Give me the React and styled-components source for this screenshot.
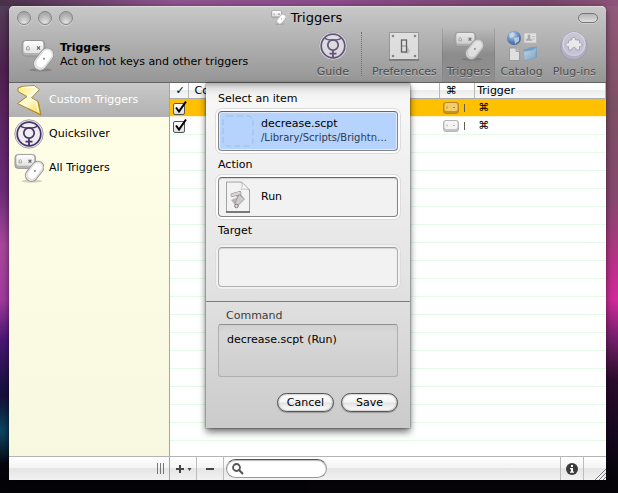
import React, { useState } from 'react';
import styled, { createGlobalStyle, css } from 'styled-components';

const Global = createGlobalStyle`
  *, *::before, *::after { box-sizing: border-box; }
  body { margin: 0; }
  body, button, input {
    font-family: "DejaVu Sans", "Liberation Sans", sans-serif;
    font-size: 11px;
    line-height: 14px;
    color: #000;
  }
  button { border: 0; margin: 0; padding: 0; background: none; text-align: left; }
  svg { display: block; flex: none; }
`;

const Desktop = styled.div`
  min-height: 100vh;
  display: flex;
  padding: 6px 12px 13px 9px;
  background:
    radial-gradient(circle at 1px 430px, #0c4664 0, transparent 34px),
    linear-gradient(90deg, #4a3048 0, #8f5590 28%, #8d4c8b 55%, #76476b 88%, #8f5478 100%) top / 100% 6px no-repeat,
    linear-gradient(180deg, #534057 0, #4f2150 70px, #6b2b78 190px, #a8489c 245px, #a03a9d 300px, #4a1674 340px, #1a1244 385px, #080914 445px, #040308 480px) left / 50% 100% no-repeat,
    linear-gradient(180deg, #945a7c 0, #7c5063 110px, #87476f 200px, #bd2f8c 270px, #d02b99 300px, #7b226f 335px, #2c0b2c 380px, #12081c 440px, #060409 480px) right / 50% 100% no-repeat;
`;

const Window = styled.div`
  flex: 1;
  min-width: 0;
  display: flex;
  flex-direction: column;
  background: #fff;
  border-radius: 5px 5px 0 0;
  box-shadow: 0 2px 7px rgba(0, 0, 0, 0.55);
`;

const Header = styled.header`
  background: linear-gradient(180deg, #c8c8c8, #969696);
  border-top: 1px solid #dcdcdc;
  border-bottom: 1px solid #636363;
  border-radius: 5px 5px 0 0;
`;

const TitleBar = styled.div`
  display: grid;
  grid-template-columns: 1fr auto 1fr;
  align-items: center;
  height: 21px;
  padding: 0 8px;
`;

const Lights = styled.div`
  display: flex;
  gap: 7px;
`;

const Light = styled.button`
  width: 14px;
  height: 14px;
  border-radius: 7px;
  border: 1px solid #858585;
  background: radial-gradient(circle at 50% 85%, #e2e2e2 0, #b9b9b9 50%, #9b9b9b 100%);
  box-shadow: 0 1px 0 #d8d8d8;
`;

const Title = styled.h1`
  display: flex;
  align-items: center;
  gap: 5px;
  margin: 0;
  padding-right: 2px;
  font-size: 13px;
  font-weight: 400;
  line-height: 16px;
`;

const Lozenge = styled.button`
  justify-self: end;
  width: 20px;
  height: 10px;
  border-radius: 5px;
  border: 1px solid #777;
  background: linear-gradient(180deg, #b4b4b4, #dedede);
  box-shadow: 0 1px 0 #d0d0d0;
`;

const Toolbar = styled.div`
  display: flex;
  justify-content: space-between;
  height: 54px;
  padding: 0 5px 0 12px;
`;

const Summary = styled.div`
  display: flex;
  align-items: center;
  gap: 6px;
`;

const SummaryTitle = styled.h2`
  margin: 0;
  font-size: 11px;
  font-weight: 700;
`;

const SummaryText = styled.p`
  margin: 0;
  white-space: nowrap;
`;

const Tools = styled.nav`
  display: flex;
`;

const Tool = styled.button`
  display: flex;
  flex-direction: column;
  align-items: center;
  gap: 4px;
  padding: 3px 4px 0;
  color: #4d4d4d;
  text-shadow: 0 1px 0 #bebebe;
  border: solid transparent;
  border-width: 0 1px;
  & > svg { opacity: 0.72; }
  ${p => p.$active && css`
    background: linear-gradient(180deg, rgba(0, 0, 0, 0), rgba(0, 0, 0, 0.17) 50%, rgba(0, 0, 0, 0.05));
    border-image: linear-gradient(180deg, #aaa, #808080 50%, #8c8c8c) 1;
  `}
`;

const ToolDivider = styled.div`
  margin: 4px 5px 6px 7px;
  border-left: 1px dotted #6c6c6c;
`;

const Main = styled.main`
  position: relative;
  flex: 1;
  display: grid;
  grid-template-columns: 161px 1fr;
`;

const Sidebar = styled.nav`
  background: linear-gradient(180deg, #fffee6, #f8f7df);
  border-right: 1px solid #a5a5a5;
`;

const Group = styled.button`
  display: flex;
  align-items: center;
  gap: 5px;
  width: 100%;
  height: 34px;
  padding: 0 5px;
  ${p => p.$active && css`
    color: #fff;
    background: linear-gradient(180deg, #c9c9c9, #b1b1b1);
  `}
`;

const Listing = styled.div`
  background: repeating-linear-gradient(180deg, #fff 0, #fff 17px, #e6faea 17px, #e6faea 18px) 0 16px;
`;

const Table = styled.table`
  width: 100%;
  table-layout: fixed;
  border-collapse: separate;
  border-spacing: 0;
`;

const Th = styled.th`
  width: ${p => p.$w || 'auto'};
  height: 16px;
  padding: 0 0 0 2px;
  text-align: ${p => p.$align || 'left'};
  font-weight: 400;
  line-height: 14px;
  white-space: nowrap;
  background: linear-gradient(180deg, #fff 0, #fcfcfc 45%, #ececec 50%, #f8f8f8 100%);
  border-right: 1px solid #b8b8b8;
  border-bottom: 1px solid #acacac;
`;

const Row = styled.tr`
  & > td {
    height: 18px;
    padding: 0 0 0 3px;
    line-height: 14px;
    border-bottom: 1px solid ${p => (p.$selected ? '#fff4cf' : '#e6faea')};
    background: ${p => (p.$selected ? '#ffc000' : '#fff')};
  }
`;

const Check = styled.label`
  position: relative;
  display: flex;
  align-items: flex-end;
  width: 16px;
  height: 16px;
  & > input {
    appearance: none;
    width: 12px;
    height: 12px;
    margin: 0 0 1px;
    border: 1px solid #555;
    border-radius: 2px;
    background: linear-gradient(180deg, #fff, #dcdcdc);
  }
  & > svg { position: absolute; left: 0; top: 0; display: none; pointer-events: none; }
  & > input:checked + svg { display: block; }
`;

const KeyCell = styled.span`
  display: flex;
  align-items: center;
  gap: 5px;
`;

const Tick = styled.span`
  width: 1px;
  height: 8px;
  background: #665c4c;
`;

const Footer = styled.footer`
  display: grid;
  grid-template-columns: 161px 1fr;
  height: 24px;
  border-top: 1px solid #b4b4b4;
  background: linear-gradient(180deg, #fff 0, #f3f3f3 50%, #e5e5e5 50%, #f2f2f2 100%);
`;

const Grip = styled.div`
  display: flex;
  align-items: center;
  justify-content: flex-end;
  padding-right: 5px;
  border-right: 1px solid #a5a5a5;
`;

const Actions = styled.div`
  display: flex;
  align-items: center;
`;

const BarButton = styled.button`
  display: flex;
  align-items: center;
  justify-content: center;
  height: 100%;
  width: ${p => p.$w}px;
  border-right: 1px solid #bcbcbc;
  ${p => p.$push && css`
    margin-left: auto;
    border-left: 1px solid #bcbcbc;
  `}
`;

const Search = styled.label`
  display: flex;
  align-items: center;
  gap: 3px;
  width: 101px;
  height: 19px;
  margin-left: 2px;
  padding: 0 8px 0 5px;
  border: 1px solid #989898;
  border-top-color: #555;
  border-radius: 10px;
  background: #fff;
  box-shadow: inset 0 1px 1px #b8b8b8;
  & > input {
    flex: 1;
    min-width: 0;
    padding: 0;
    border: 0;
    outline: 0;
    background: none;
  }
`;

const Resizer = styled.div`
  align-self: flex-end;
  width: 22px;
  display: flex;
  justify-content: flex-end;
`;

const SheetArea = styled.div`
  position: absolute;
  inset: 0;
  display: flex;
  justify-content: center;
  align-items: flex-start;
  padding-left: 1px;
  pointer-events: none;
`;

const Sheet = styled.form`
  width: 204px;
  pointer-events: auto;
  background: linear-gradient(180deg, #b0b0b0 0, #dedede 5px, #f2f2f2 11px, #f7f7f7 20px, #e4e4e4 190px, #cbcbcb 100%);
  box-shadow: 0 4px 7px rgba(0, 0, 0, 0.55), 0 0 2px rgba(0, 0, 0, 0.6);
`;

const Fields = styled.div`
  display: flex;
  flex-direction: column;
  gap: 6px;
  padding: 8px 12px 14px;
  border-bottom: 1px solid #7d7d7d;
`;

const Field = styled.div`
  display: flex;
  flex-direction: column;
  gap: ${p => (p.$loose ? 8 : 4)}px;
  & > label { line-height: 16px; }
`;

const Well = styled.button`
  display: flex;
  align-items: center;
  gap: 7px;
  width: 100%;
  height: 40px;
  padding: 2px 8px 2px 3px;
  border: 1px solid ${p => (p.$dim ? '#b0b0b0' : '#858585')};
  border-top-color: ${p => (p.$dim ? '#9c9c9c' : '#666')};
  border-radius: 4px;
  background: ${p => (p.$selected ? '#b5d3fc' : '#f2f2f2')};
  box-shadow: ${p => (p.$selected ? 'inset 0 0 0 1px #dfebfb, ' : 'inset 0 1px 1px #d4d4d4, ')}
    0 0 0 2px ${p => (p.$dim ? '#f1f1f1' : '#fdfdfd')}, 0 0 0 3px #dcdcdc;
`;

const WellText = styled.span`
  display: flex;
  flex-direction: column;
`;

const Path = styled.span`
  font-size: 10px;
  line-height: 14px;
  color: #2c3b52;
  white-space: nowrap;
`;

const CommandArea = styled.div`
  padding: 6px 12px 16px;
`;

const CommandLabel = styled.label`
  display: block;
  padding-left: 8px;
  line-height: 16px;
  color: #3c3c3c;
`;

const Command = styled.output`
  display: block;
  height: 53px;
  padding: 8px;
  border: 1px solid #b0b0b0;
  border-top-color: #8f8f8f;
  border-radius: 3px;
  background: linear-gradient(180deg, #d0d0d0 0, #d8d8d8 8px, #cecece 100%);
`;

const Buttons = styled.div`
  display: flex;
  justify-content: flex-end;
  gap: 7px;
  margin-top: 16px;
`;

const Push = styled.button`
  width: 57px;
  height: 19px;
  text-align: center;
  border: 1px solid #555;
  border-radius: 10px;
  background: linear-gradient(180deg, #fff 0, #f4f4f4 48%, #e2e2e2 52%, #fff 100%);
  box-shadow: inset 0 0 2px #777, 0 1px 1px #999;
`;

function TriggerIcon({ size = 32 }) {
  return (
    <svg width={size} height={size} viewBox="0 0 32 32">
      <defs>
        <linearGradient id="keyTop" x1="0" y1="0" x2="0" y2="1">
          <stop offset="0" stopColor="#fff" />
          <stop offset="1" stopColor="#e2e2e2" />
        </linearGradient>
      </defs>
      <ellipse cx="19" cy="30" rx="11" ry="1.6" fill="#000" opacity=".16" />
      <rect x="1" y="1.500" width="22" height="15" rx="3.500" fill="#b2b2b2" stroke="#8c8c8c" strokeWidth=".8" />
      <rect x="2.500" y="2" width="19" height="11.500" rx="2.500" fill="url(#keyTop)" />
      <path d="M5.500 7.800 L7 7 L8 8.500 V10.500 H5.300 Z" fill="none" stroke="#999" strokeWidth=".9" />
      <path d="M15.500 7.200 L18.500 10.300 M18.500 7.200 L15.500 10.300" stroke="#666" strokeWidth="1.200" />
      <g transform="rotate(38 22 19.500)">
        <rect x="15.500" y="7.500" width="13" height="24" rx="6.500" fill="#e9e9e9" stroke="#979797" strokeWidth="1" />
        <rect x="17" y="9" width="10" height="20" rx="5" fill="#fff" stroke="#d2d2d2" strokeWidth=".8" />
        <circle cx="22" cy="19" r="1" fill="#808080" />
      </g>
    </svg>
  );
}

function MercuryIcon({ size = 30 }) {
  return (
    <svg width={size} height={size} viewBox="0 0 30 30" fill="none">
      <circle cx="15" cy="15" r="14.200" fill="#eeedf1" stroke="#a39fac" strokeWidth="1" />
      <circle cx="15" cy="15" r="11.800" stroke="#493267" strokeWidth="1.700" />
      <path d="M6.500 7 C10 9.800 20 9.800 23.500 7" stroke="#493267" strokeWidth="1.500" />
      <circle cx="15" cy="14" r="5.200" stroke="#493267" strokeWidth="1.700" />
      <path d="M15 19.200 V26.500 M11.500 22.700 H18.500" stroke="#493267" strokeWidth="1.800" />
    </svg>
  );
}

function BoltIcon() {
  return (
    <svg width="30" height="32" viewBox="0 0 30 32">
      <defs>
        <linearGradient id="bolt" x1="0" y1="0" x2="1" y2="1">
          <stop offset="0" stopColor="#ffe873" />
          <stop offset=".5" stopColor="#fffcd4" />
          <stop offset="1" stopColor="#f8d23c" />
        </linearGradient>
      </defs>
      <path d="M4 4 L8 2.500 L20 1.500 L25.500 5.500 L17.500 14 L24 17.500 L27 31 L3.500 19.500 L13 12.500 L4 7.500 Z" fill="url(#bolt)" stroke="#a5853f" strokeWidth="1" strokeLinejoin="round" />
      <path d="M8 3.600 L20 2.700 L23.500 5.500 L15.500 13.700 L22 17.800 L24.500 28" fill="none" stroke="#fffef0" strokeWidth="1.200" />
      <path d="M24 17.500 L27 31 L14 24.500" fill="none" stroke="#b98b20" strokeWidth="1" />
    </svg>
  );
}

function SwitchIcon() {
  return (
    <svg width="32" height="30" viewBox="0 0 32 30">
      <rect x="1.500" y="1.500" width="29" height="27" fill="#f0f0f0" stroke="#8d8d8d" />
      <path d="M1 29 H31" stroke="#555" strokeWidth="1.300" />
      {[[5, 5], [27, 5], [5, 25], [27, 25]].map(([x, y]) => (
        <circle key={`${x}-${y}`} cx={x} cy={y} r="1.300" fill="#777" />
      ))}
      <path d="M18 13 L22 20 L20 23 L15 21 Z" fill="#c4c4c4" />
      <rect x="13.500" y="9" width="5" height="12" fill="#f4f4f4" stroke="#444" strokeWidth="1.300" />
      <path d="M14 15 H18" stroke="#777" />
    </svg>
  );
}

function CatalogIcon() {
  return (
    <svg width="32" height="30" viewBox="0 0 32 30">
      <defs>
        <radialGradient id="globe" cx=".4" cy=".3" r=".8">
          <stop offset="0" stopColor="#c8e4ff" />
          <stop offset=".6" stopColor="#326fc0" />
          <stop offset="1" stopColor="#123a80" />
        </radialGradient>
        <linearGradient id="folder" x1="0" y1="0" x2="1" y2="1">
          <stop offset="0" stopColor="#d4ebfa" />
          <stop offset="1" stopColor="#68a1cf" />
        </linearGradient>
      </defs>
      <circle cx="8" cy="7" r="7" fill="url(#globe)" />
      <path d="M3 3 L7 1 L9 3 L7 6 L4 7 Z M8 7 L13 6 L13 10 L9 13 Z" fill="#d5e8f5" opacity=".8" />
      <rect x="18" y="2" width="12.500" height="10" fill="#f1f1f1" stroke="#b4b4b4" strokeWidth=".7" />
      <path d="M20 9.500 V8.500 L22 7.500 V4 H24 V7.500 L26 9.500 Z M26 5.500 H29 M26 8 H29" fill="#a6a6a6" stroke="#a6a6a6" strokeWidth=".6" />
      <path d="M3.500 17 H10 L13.500 20.500 V29.500 H3.500 Z" fill="#f4f4f4" stroke="#888" strokeWidth=".8" />
      <path d="M10 17 V20.500 H13.500" fill="#d7d7d7" stroke="#888" strokeWidth=".7" />
      <path d="M17.500 18.500 L22 17.500 L23 16.500 L31 15.500 V26 L18.500 29.500 Z" fill="#5f9ac9" />
      <path d="M17.500 20.500 L27 19 L30.500 16.500 L29.500 27 L18 29.500 Z" fill="url(#folder)" stroke="#729fc4" strokeWidth=".6" />
    </svg>
  );
}

function PluginIcon() {
  return (
    <svg width="30" height="30" viewBox="0 0 30 30">
      <path d="M8 3 Q15 -1 22 3 L27.500 11 Q29 19 25 24 Q20 29 15 29 Q9 29 5 25 Q0 19 2.500 11 Z" fill="#b6b1cf" stroke="#938eac" strokeWidth=".8" />
      <ellipse cx="15" cy="13" rx="11" ry="11.500" fill="#d0cce4" stroke="#e6e3f1" strokeWidth="1.200" />
      <path d="M10 9 H13 C11.500 5.500 17.500 5.500 16.500 9 H20.500 V12 C24 10.500 24 16.500 20.500 15.500 V19 H17 C18 15.500 12 15.500 13 19 H9.500 V15.500 C6 17 6 10.500 9.500 12 Z" fill="#fff" stroke="#9993b3" strokeWidth=".8" />
    </svg>
  );
}

function ScriptIcon() {
  return (
    <svg width="32" height="32" viewBox="0 0 32 32">
      <path d="M4.500 1 H19.500 L27.500 9 V31 H4.500 Z" fill="#f3f3f3" stroke="#9a9a9a" strokeWidth=".9" />
      <path d="M4 31 H28" stroke="#444" strokeWidth="1.200" />
      <path d="M19.500 1 C20.500 4 20.500 6 19.500 8.500 C22 7.500 25 8 27.500 9 Z" fill="#fff" stroke="#a8a8a8" strokeWidth=".7" />
      <path d="M12 13 L18 11.500 L22.500 18 L14.500 26 L9 19 L15 16.500 Z" fill="#b9b3b3" />
      <path d="M17 13.500 L22.500 18 L15 25.500 L13 22 Z" fill="#d0cbcb" stroke="#8a8585" strokeWidth=".6" />
      <path d="M10.500 14 L17.500 12" stroke="#888" strokeWidth="3.800" strokeLinecap="round" />
      <path d="M10.500 14 L17.500 12" stroke="#dcd8d8" strokeWidth="2.600" strokeLinecap="round" />
      <circle cx="14.500" cy="25" r="1.800" fill="#ddd" stroke="#666" strokeWidth=".8" />
    </svg>
  );
}

function EmptySlotIcon() {
  return (
    <svg width="32" height="34" viewBox="0 0 32 34">
      <rect x="1" y="2" width="30" height="30" rx="5" fill="none" stroke="#a2bde2" strokeDasharray="6 3" />
    </svg>
  );
}

function KeyIcon({ gold }) {
  return (
    <svg width="16" height="12" viewBox="0 0 16 12">
      <rect x=".5" y=".5" width="15" height="11" rx="2.500" fill={gold ? '#c89420' : '#c4c4c4'} stroke={gold ? '#b5872a' : '#b5b5b5'} />
      <rect x="1.500" y="1" width="13" height="8" rx="2" fill={gold ? '#f2cd69' : '#f5f5f5'} />
      <path d="M4 4.500 V6.500 M10 5.500 H12" stroke={gold ? '#b8913e' : '#b4b4b4'} strokeWidth="1.200" />
    </svg>
  );
}

const groups = [
  { name: 'Custom Triggers', Icon: BoltIcon },
  { name: 'Quicksilver', Icon: MercuryIcon },
  { name: 'All Triggers', Icon: TriggerIcon },
];

const tools = [
  { name: 'Preferences', Icon: SwitchIcon },
  { name: 'Triggers', Icon: TriggerIcon, active: true },
  { name: 'Catalog', Icon: CatalogIcon },
  { name: 'Plug-ins', Icon: PluginIcon },
];

const rows = [
  { id: 'first', selected: true },
  { id: 'second', selected: false },
];

export default function App() {
  const [group, setGroup] = useState('Custom Triggers');
  return (
    <Desktop>
      <Global />
      <Window>
        <Header>
          <TitleBar>
            <Lights>
              <Light aria-label="Close" />
              <Light aria-label="Minimize" />
              <Light aria-label="Zoom" />
            </Lights>
            <Title><TriggerIcon size={15} />Triggers</Title>
            <Lozenge aria-label="Toggle toolbar" />
          </TitleBar>
          <Toolbar>
            <Summary>
              <TriggerIcon size={33} />
              <div>
                <SummaryTitle>Triggers</SummaryTitle>
                <SummaryText>Act on hot keys and other triggers</SummaryText>
              </div>
            </Summary>
            <Tools>
              <Tool><MercuryIcon />Guide</Tool>
              <ToolDivider />
              {tools.map(({ name, Icon, active }) => (
                <Tool key={name} $active={active}><Icon size={30} />{name}</Tool>
              ))}
            </Tools>
          </Toolbar>
        </Header>

        <Main>
          <Sidebar>
            {groups.map(({ name, Icon }) => (
              <Group key={name} $active={group === name} onClick={() => setGroup(name)}>
                <Icon size={30} />{name}
              </Group>
            ))}
          </Sidebar>
          <Listing>
            <Table>
              <thead>
                <tr>
                  <Th $w="19px" $align="center">✓</Th>
                  <Th>&nbsp;Command</Th>
                  <Th $w="35px">&nbsp;⌘</Th>
                  <Th $w="30%">Trigger</Th>
                </tr>
              </thead>
              <tbody>
                {rows.map(row => (
                  <Row key={row.id} $selected={row.selected}>
                    <td>
                      <Check>
                        <input type="checkbox" defaultChecked aria-label="Enabled" />
                        <svg width="16" height="16" viewBox="0 0 16 16">
                          <path d="M3 7.500 L6 11.500 L13 1.500" fill="none" stroke="#000" strokeWidth="2" />
                        </svg>
                      </Check>
                    </td>
                    <td />
                    <td><KeyCell><KeyIcon gold={row.selected} /><Tick /></KeyCell></td>
                    <td>⌘</td>
                  </Row>
                ))}
              </tbody>
            </Table>
          </Listing>

          <SheetArea>
            <Sheet onSubmit={e => e.preventDefault()}>
              <Fields>
                <Field>
                  <label htmlFor="item">Select an item</label>
                  <Well id="item" type="button" $selected>
                    <EmptySlotIcon />
                    <WellText>
                      <span>decrease.scpt</span>
                      <Path>/Library/Scripts/Brightn…</Path>
                    </WellText>
                  </Well>
                </Field>
                <Field>
                  <label htmlFor="action">Action</label>
                  <Well id="action" type="button">
                    <ScriptIcon />
                    <span>Run</span>
                  </Well>
                </Field>
                <Field $loose>
                  <label htmlFor="target">Target</label>
                  <Well id="target" type="button" $dim />
                </Field>
              </Fields>
              <CommandArea>
                <CommandLabel htmlFor="command">Command</CommandLabel>
                <Command id="command">decrease.scpt (Run)</Command>
                <Buttons>
                  <Push type="button">Cancel</Push>
                  <Push type="submit">Save</Push>
                </Buttons>
              </CommandArea>
            </Sheet>
          </SheetArea>
        </Main>

        <Footer>
          <Grip>
            <svg width="7" height="11" viewBox="0 0 7 11">
              <path d="M.5 0 V11 M3.500 0 V11 M6.500 0 V11" stroke="#777" />
            </svg>
          </Grip>
          <Actions>
            <BarButton $w={27} aria-label="Add trigger">
              <svg width="17" height="10" viewBox="0 0 17 10">
                <path d="M1 5 H9 M5 1 V9" stroke="#444" strokeWidth="2" />
                <path d="M12.500 4 H16.500 L14.500 7 Z" fill="#444" />
              </svg>
            </BarButton>
            <BarButton $w={27} aria-label="Remove trigger">
              <svg width="8" height="10" viewBox="0 0 8 10"><path d="M0 5 H8" stroke="#444" strokeWidth="2" /></svg>
            </BarButton>
            <Search>
              <svg width="12" height="12" viewBox="0 0 12 12">
                <circle cx="4.500" cy="4.500" r="3.500" fill="none" stroke="#555" strokeWidth="1.800" />
                <path d="M7 7 L11 11" stroke="#555" strokeWidth="2.200" />
              </svg>
              <input type="text" aria-label="Search triggers" />
            </Search>
            <BarButton $w={24} $push aria-label="Show info">
              <svg width="12" height="12" viewBox="0 0 12 12">
                <circle cx="6" cy="6" r="6" fill="#3c3c3c" />
                <path d="M5 2 H7 V4 H5 Z M4 5 H7 V8.500 H8 V9.700 H4 V8.500 H5 V6.200 H4 Z" fill="#fff" />
              </svg>
            </BarButton>
            <Resizer>
              <svg width="12" height="12" viewBox="0 0 12 12">
                <path d="M1 12 L12 1 M5 12 L12 5 M9 12 L12 9" stroke="#777" />
              </svg>
            </Resizer>
          </Actions>
        </Footer>
      </Window>
    </Desktop>
  );
}
